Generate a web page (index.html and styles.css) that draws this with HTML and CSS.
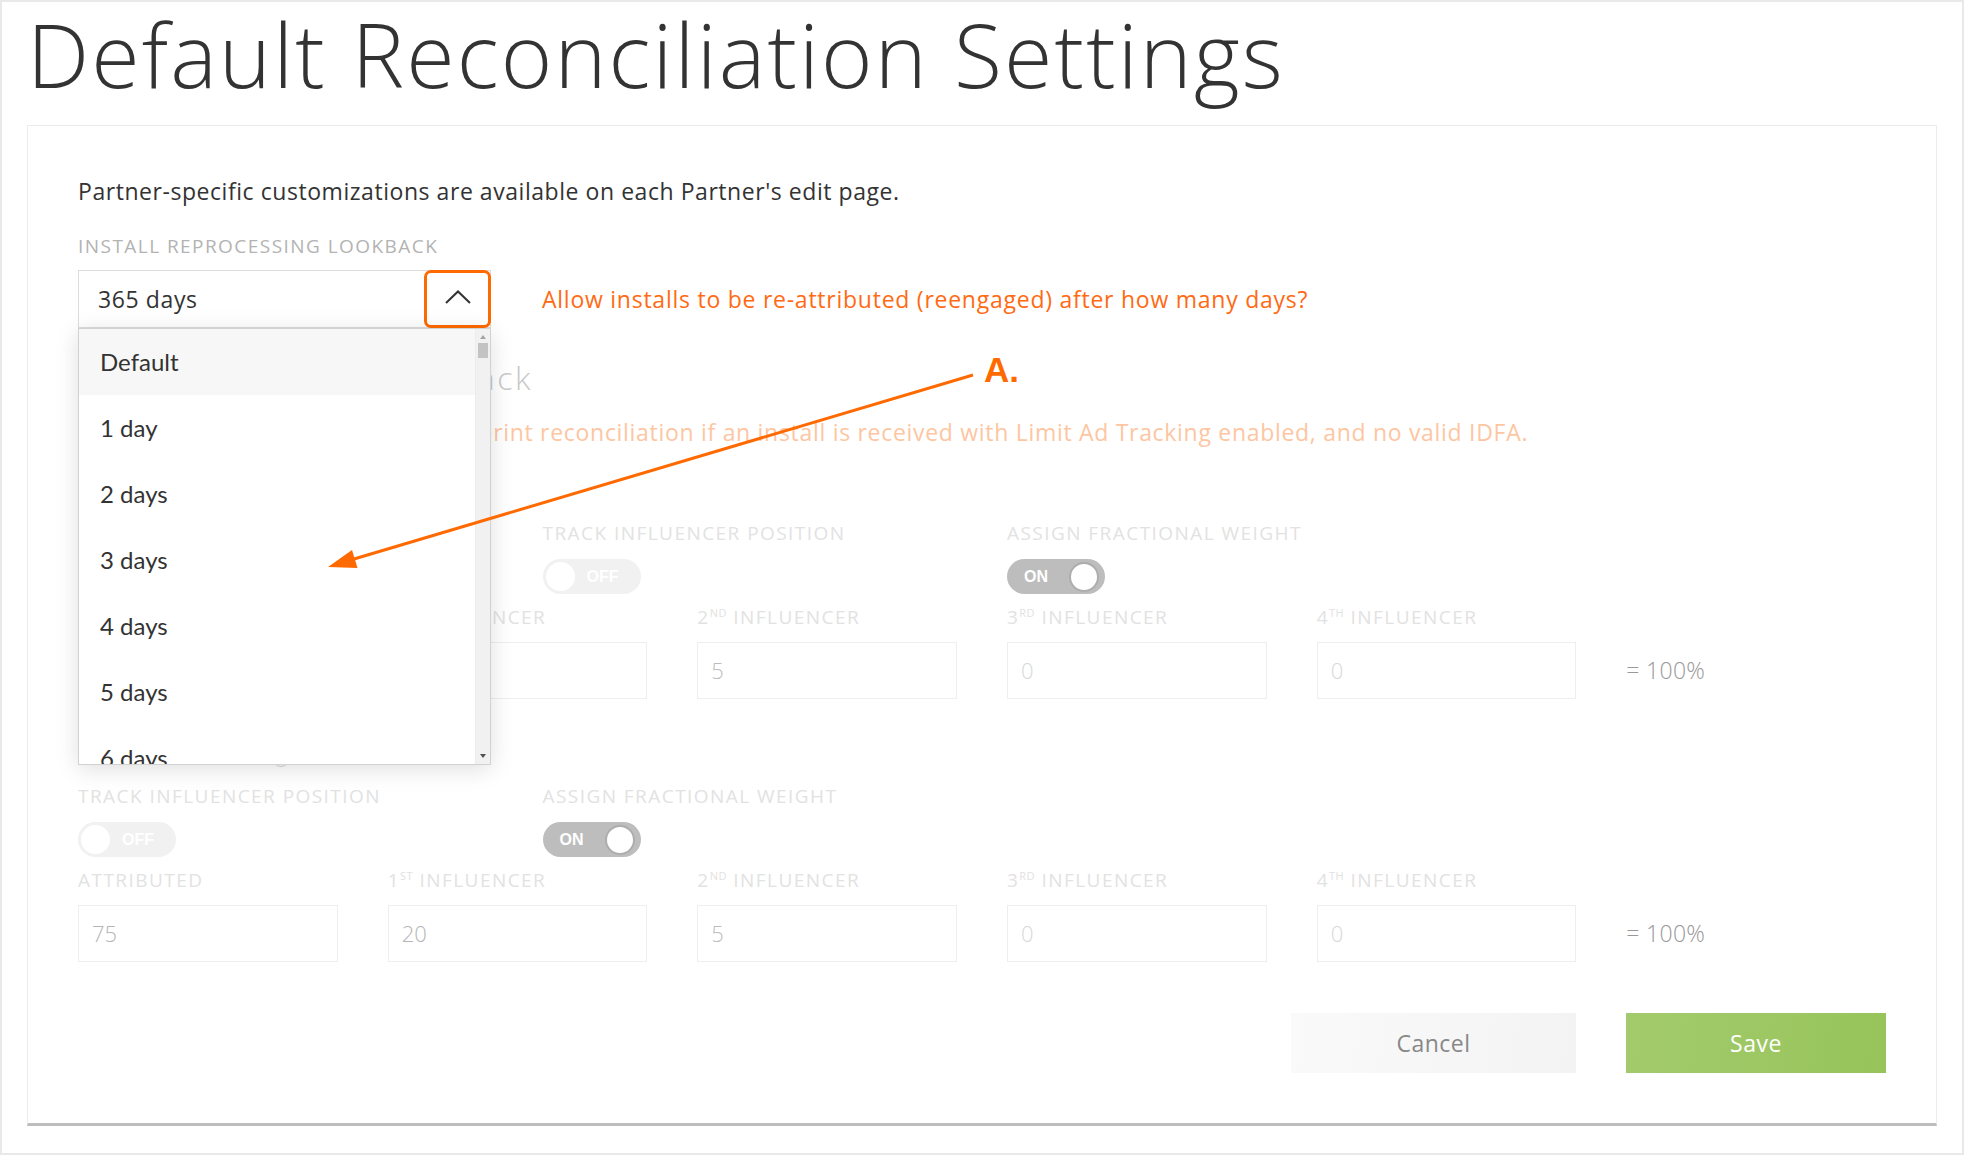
FILE: index.html
```html
<!DOCTYPE html>
<html>
<head>
<meta charset="utf-8">
<title>Default Reconciliation Settings</title>
<link rel="stylesheet" href="styles.css">
</head>
<body>
<div class="frame">
  <h1 class="title">Default Reconciliation Settings</h1>
  <div class="card">
    <p class="intro">Partner-specific customizations are available on each Partner's edit page.</p>

    <div class="label">INSTALL REPROCESSING LOOKBACK</div>
    <div class="select-row">
      <div class="select-wrap">
        <div class="select">
          <span class="select-value">365 days</span>
          <span class="caret-btn">
            <svg width="26" height="14" viewBox="0 0 26 14"><polyline points="1,13 13,1.5 25,13" fill="none" stroke="#333" stroke-width="2"/></svg>
          </span>
        </div>
        <div class="dropdown">
          <ul class="options">
            <li class="option active">Default</li>
            <li class="option">1 day</li>
            <li class="option">2 days</li>
            <li class="option">3 days</li>
            <li class="option">4 days</li>
            <li class="option">5 days</li>
            <li class="option">6 days</li>
          </ul>
          <div class="scrollbar">
            <span class="sb-up"></span>
            <span class="sb-thumb"></span>
            <span class="sb-down"></span>
          </div>
        </div>
      </div>
      <div class="hint">Allow installs to be re-attributed (reengaged) after how many days?</div>
    </div>

    <h2 class="sec-title">Limit Ad Tracking Lookback</h2>
    <p class="sec-desc">When enabled, allows device fingerprint reconciliation if an install is received with Limit Ad Tracking enabled, and no valid IDFA.</p>

    <div class="toggles">
      <div class="tcell"></div>
      <div class="tcell">
        <div class="flabel">TRACK INFLUENCER POSITION</div>
        <div class="toggle off"><span class="knob"></span><span class="ttext">OFF</span></div>
      </div>
      <div class="tcell">
        <div class="flabel">ASSIGN FRACTIONAL WEIGHT</div>
        <div class="toggle on"><span class="ttext">ON</span><span class="knob"></span></div>
      </div>
    </div>

    <div class="weights">
      <div class="wcell"><div class="flabel">&nbsp;</div><div class="winput"></div></div>
      <div class="wcell"><div class="flabel">1<sup>ST</sup> INFLUENCER</div><div class="winput dark">20</div></div>
      <div class="wcell"><div class="flabel">2<sup>ND</sup> INFLUENCER</div><div class="winput mid">5</div></div>
      <div class="wcell"><div class="flabel">3<sup>RD</sup> INFLUENCER</div><div class="winput light">0</div></div>
      <div class="wcell"><div class="flabel">4<sup>TH</sup> INFLUENCER</div><div class="winput light">0</div></div>
      <div class="wcell"><div class="flabel">&nbsp;</div><div class="wtotal">= 100%</div></div>
    </div>

    <div class="sub-head"><span class="help"></span></div>

    <div class="toggles second">
      <div class="tcell">
        <div class="flabel">TRACK INFLUENCER POSITION</div>
        <div class="toggle off"><span class="knob"></span><span class="ttext">OFF</span></div>
      </div>
      <div class="tcell">
        <div class="flabel">ASSIGN FRACTIONAL WEIGHT</div>
        <div class="toggle on"><span class="ttext">ON</span><span class="knob"></span></div>
      </div>
    </div>

    <div class="weights">
      <div class="wcell"><div class="flabel">ATTRIBUTED</div><div class="winput dark">75</div></div>
      <div class="wcell"><div class="flabel">1<sup>ST</sup> INFLUENCER</div><div class="winput dark">20</div></div>
      <div class="wcell"><div class="flabel">2<sup>ND</sup> INFLUENCER</div><div class="winput mid">5</div></div>
      <div class="wcell"><div class="flabel">3<sup>RD</sup> INFLUENCER</div><div class="winput light">0</div></div>
      <div class="wcell"><div class="flabel">4<sup>TH</sup> INFLUENCER</div><div class="winput light">0</div></div>
      <div class="wcell"><div class="flabel">&nbsp;</div><div class="wtotal">= 100%</div></div>
    </div>

    <div class="actions">
      <button class="btn cancel">Cancel</button>
      <button class="btn save">Save</button>
    </div>
  </div>
</div>

<svg class="annotation" width="1964" height="1155" viewBox="0 0 1964 1155">
  <line x1="354" y1="559" x2="973" y2="375" stroke="#ff6a00" stroke-width="3"/>
  <polygon points="328,567 352,550 357.5,568" fill="#ff6a00"/>
</svg>
<div class="annot-label">A.</div>
</body>
</html>
```

FILE: styles.css
```css
* { box-sizing: border-box; }
html, body { margin: 0; padding: 0; background: #fff; }
body {
  font-family: "Open Sans", "Liberation Sans", sans-serif;
  font-variant-ligatures: none;
  color: #333;
  width: 1964px;
  height: 1155px;
  overflow: hidden;
}
.frame {
  position: relative;
  width: 1964px;
  height: 1155px;
  border: 2px solid #e9e9e9;
  padding: 0 25px;
}
.title {
  margin: 0;
  font-weight: 300;
  font-size: 88px;
  line-height: 104px;
  letter-spacing: 2.15px;
  color: #333;
  white-space: nowrap;
}
.card {
  margin-top: 19px;
  border: 1px solid #ececec;
  border-bottom: 3px solid #bdbdbd;
  padding: 50px 50px 50px 50px;
}
.intro {
  margin: 0;
  font-size: 23px;
  line-height: 30px;
  letter-spacing: 0.55px;
  color: #333;
}
.label {
  margin-top: 29px;
  font-size: 19px;
  line-height: 22px;
  letter-spacing: 1.45px;
  color: #b3b3b3;
}
.select-row {
  margin-top: 13px;
  display: flex;
  align-items: center;
  gap: 51px;
}
.select-wrap {
  position: relative;
  width: 413px;
  z-index: 5;
}
.select {
  display: flex;
  align-items: center;
  height: 58px;
  border: 1px solid #dcdcdc;
  background: #fff;
}
.select-value {
  flex: 1;
  padding-left: 19px;
  font-size: 23px;
  letter-spacing: 0.6px;
  color: #333;
}
.caret-btn {
  width: 67px;
  height: 58px;
  margin: -1px -1px -1px 0;
  border: 3px solid #ff6a00;
  border-radius: 7px;
  display: flex;
  align-items: center;
  justify-content: center;
  padding-bottom: 4px;
}
.dropdown {
  position: absolute;
  left: 0;
  top: 100%;
  width: 413px;
  height: 437px;
  border: 1px solid #d2d2d2;
  background: #fff;
  box-shadow: 0 4px 22px rgba(0, 0, 0, 0.13);
  overflow: hidden;
}
.options {
  list-style: none;
  margin: 0;
  padding: 0 15px 0 0;
}
.option {
  height: 66px;
  line-height: 66px;
  padding-left: 21px;
  font-family: "Lato", "Liberation Sans", sans-serif;
  font-size: 24px;
  color: #333;
}
.option.active { background: #f7f7f7; }
.scrollbar {
  position: absolute;
  top: 0;
  right: 0;
  bottom: 0;
  width: 15px;
  background: #f1f1f1;
  border-left: 1px solid #ececec;
}
.sb-up, .sb-down {
  position: absolute;
  left: 4px;
  width: 0;
  height: 0;
  border-left: 3px solid transparent;
  border-right: 3px solid transparent;
}
.sb-up { top: 6px; border-bottom: 4px solid #a3a3a3; }
.sb-down { bottom: 6px; border-top: 4px solid #505050; }
.sb-thumb {
  position: absolute;
  top: 14px;
  left: 2px;
  width: 10px;
  height: 15px;
  background: #c3c3c3;
}
.hint {
  font-size: 23px;
  letter-spacing: 0.75px;
  color: #ff6a13;
}
.sec-title {
  margin: 30px 0 0 0;
  font-size: 32px;
  line-height: 40px;
  letter-spacing: 2.55px;
  font-weight: 300;
  color: #c9c9c9;
}
.sec-desc {
  margin: 19px 0 0 0;
  font-size: 23px;
  line-height: 30px;
  letter-spacing: 0.7px;
  color: #fdc6a2;
  white-space: nowrap;
}
.toggles {
  margin-top: 75px;
  display: grid;
  grid-template-columns: repeat(4, 1fr);
  column-gap: 50px;
}
.sub-head {
  margin-top: 50px;
  height: 20px;
  padding-left: 194px;
}
.help {
  display: block;
  width: 18px;
  height: 18px;
  border: 1.5px solid #d6d6d6;
  border-radius: 50%;
}
.toggles.second { margin-top: 16px; }
.flabel {
  font-size: 19px;
  line-height: 22px;
  letter-spacing: 1.45px;
  color: #e2e2e2;
  white-space: nowrap;
}
.flabel sup {
  font-size: 11px;
  line-height: 0;
  letter-spacing: 0.5px;
  vertical-align: 7px;
}
.toggle {
  margin-top: 15px;
  width: 98px;
  height: 35px;
  border-radius: 18px;
  display: flex;
  align-items: center;
  padding: 0 3px;
  gap: 12px;
}
.toggle.off { background: #f1f1f1; }
.toggle.on { background: #bdbdbd; padding-left: 17px; gap: 21px; }
.knob {
  width: 29px;
  height: 29px;
  border-radius: 50%;
  background: #fff;
}
.toggle.on .knob { border: 2px solid #adadad; width: 30px; height: 30px; }
.ttext {
  font-family: "Liberation Sans", sans-serif;
  font-weight: bold;
  font-size: 16px;
  color: #fff;
}
.weights {
  margin-top: 12px;
  display: grid;
  grid-template-columns: repeat(6, 1fr);
  column-gap: 50px;
}
.winput {
  margin-top: 14px;
  height: 57px;
  border: 1px solid #eeeeee;
  padding-left: 13px;
  line-height: 55px;
  font-size: 22px;
  font-weight: 300;
}
.winput.dark { color: #b5b5b5; }
.winput.mid { color: #bdbdbd; }
.winput.light { color: #d8d8d8; }
.wtotal {
  margin-top: 14px;
  height: 57px;
  line-height: 57px;
  font-size: 23px;
  font-weight: 300;
  letter-spacing: 0.3px;
  color: #999;
}
.actions {
  margin-top: 51px;
  display: flex;
  justify-content: flex-end;
  gap: 50px;
}
.btn {
  height: 60px;
  border: none;
  font-family: "Open Sans", "Liberation Sans", sans-serif;
  font-size: 23px;
  letter-spacing: 0.5px;
  padding: 0;
}
.btn.cancel {
  width: 285px;
  background: linear-gradient(100deg, #fafafa, #f3f3f3);
  color: #888;
}
.btn.save {
  width: 260px;
  background: linear-gradient(100deg, #a3cb6d, #97c45a);
  color: #fff;
}
.annotation {
  position: absolute;
  left: 0;
  top: 0;
  pointer-events: none;
  z-index: 10;
}
.annot-label {
  position: absolute;
  left: 984px;
  top: 352px;
  font-family: "Liberation Sans", sans-serif;
  font-weight: bold;
  font-size: 35px;
  line-height: 35px;
  color: #ff6a00;
  z-index: 10;
}
```
